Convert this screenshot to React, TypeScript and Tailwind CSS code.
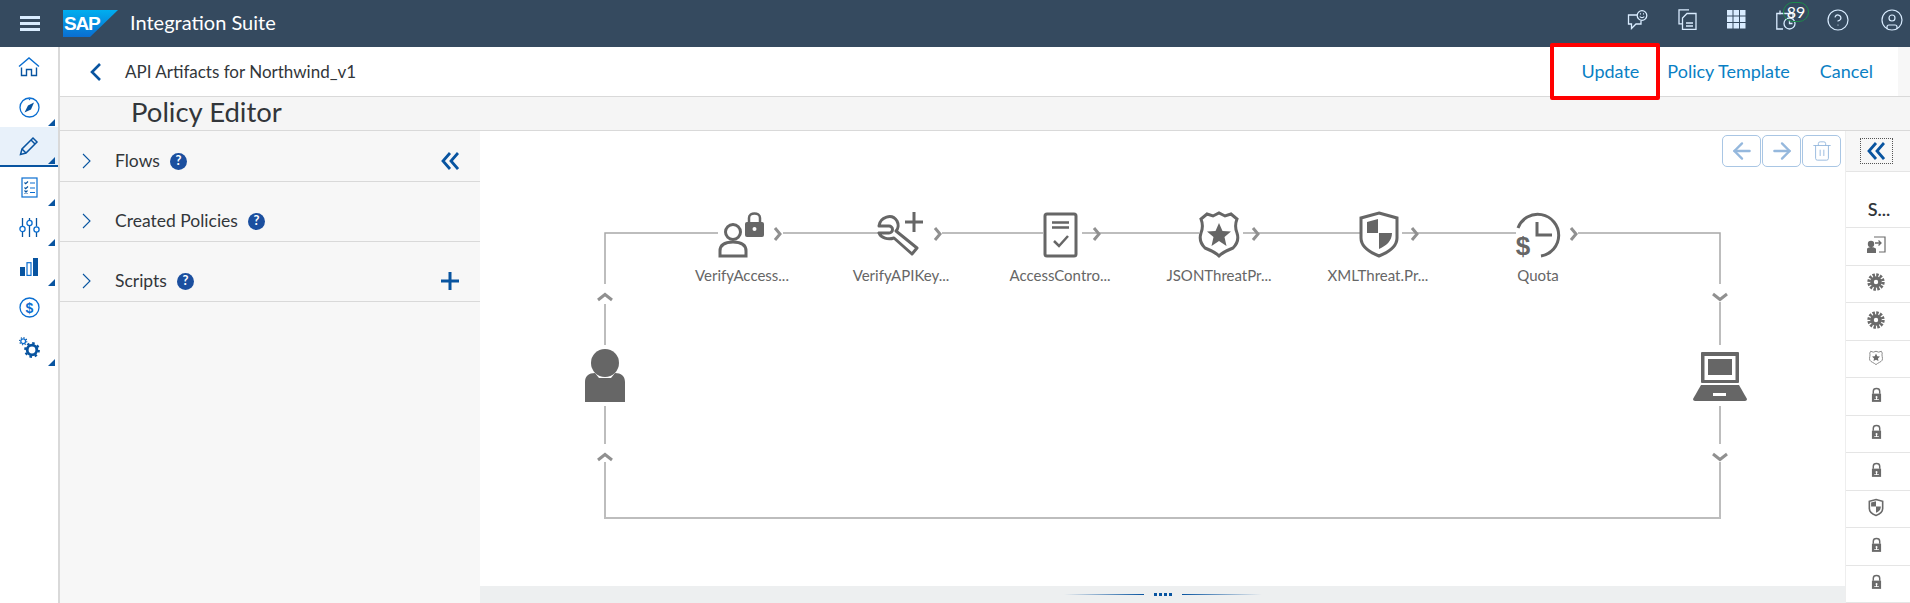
import { useId } from "react";
import { ArrowLeft, ArrowRight, Trash2, CircleHelp, CircleUser } from "lucide-react";

const FONT = "font-['Lato','Noto_Sans',sans-serif]";

function SapLogo() {
  const id = useId();
  return (
    <svg width="55" height="27" viewBox="0 0 55 27">
      <defs>
        <linearGradient id={id} x1="0" y1="0" x2="0" y2="1">
          <stop offset="0" stopColor="#00aeef" />
          <stop offset="1" stopColor="#0a6ed1" />
        </linearGradient>
      </defs>
      <polygon points="0,0 55,0 27,27 0,27" fill={`url(#${id})`} />
      <text x="1" y="20" fontFamily="Liberation Sans" fontWeight="700" fontSize="19" letterSpacing="-1.2" fill="#fff">
        SAP
      </text>
    </svg>
  );
}

function HomeIcon() {
  return (
    <svg width="22" height="20" viewBox="0 0 22 20" fill="none" stroke="#0a6ed1" strokeWidth="1.400">
      <path d="M1 9.500L11 1l10 8.500" />
      <path d="M3.500 10.500V18.500H8.500V12.500H13.500V18.500H18.500V10.500" stroke="#0854a0" />
    </svg>
  );
}

function CompassIcon() {
  return (
    <svg width="21" height="21" viewBox="0 0 21 21" fill="none">
      <circle cx="10.500" cy="10.500" r="9.500" stroke="#0a6ed1" strokeWidth="1.300" />
      <path d="M15 5.500L12 12.500L5.500 15.500L9 8.500z" fill="#0854a0" />
      <circle cx="10.500" cy="2.500" r="0.800" fill="#0a6ed1" />
    </svg>
  );
}

function PencilIcon() {
  return (
    <svg width="20" height="20" viewBox="0 0 20 20" fill="none" stroke="#0854a0" strokeWidth="1.500">
      <path d="M1.500 18.500l1.500-5.500L14 2l4 4L7 17z" />
      <path d="M12 4l4 4M3 13l4 4" />
    </svg>
  );
}

function Checklist() {
  return (
    <svg width="17" height="21" viewBox="0 0 17 21" fill="none" stroke="#0a6ed1" strokeWidth="1.200">
      <rect x="1" y="1" width="15" height="19" />
      <path d="M3.500 5.500l1.200 1.200L7 4.500M3.500 10.500l1.200 1.200L7 9.500M3.500 13.500l3 3M6.500 13.500l-3 3" stroke="#0854a0" />
      <path d="M9 6h5M9 11h5M9 15.500h5" />
    </svg>
  );
}

function Sliders() {
  return (
    <svg width="21" height="19" viewBox="0 0 21 19" fill="none" stroke="#0a6ed1" strokeWidth="1.300">
      <path d="M3.500 0v8M3.500 14v5M10.500 0v2M10.500 8v11M17.500 0v8.500M17.500 14v5" stroke="#0854a0" />
      <circle cx="3.500" cy="11" r="2.600" />
      <circle cx="10.500" cy="5" r="2.600" />
      <circle cx="17.500" cy="11.500" r="2.600" />
    </svg>
  );
}

function Bars() {
  return (
    <svg width="18" height="18" viewBox="0 0 18 18">
      <rect x="0" y="9" width="5" height="9" fill="#0854a0" />
      <rect x="7" y="4.700" width="4" height="12.700" fill="none" stroke="#0a6ed1" strokeWidth="1.200" />
      <rect x="13" y="0" width="5" height="18" fill="#0854a0" />
    </svg>
  );
}

function DollarCircle() {
  return (
    <svg width="21" height="21" viewBox="0 0 21 21">
      <circle cx="10.500" cy="10.500" r="9.500" fill="none" stroke="#0a6ed1" strokeWidth="1.300" />
      <text x="10.500" y="15.500" textAnchor="middle" fontFamily="Liberation Sans" fontWeight="700" fontSize="14" fill="#0a6ed1">
        $
      </text>
    </svg>
  );
}

function Gears() {
  return (
    <svg width="21" height="21" viewBox="0 0 21 21" fill="none">
      <circle cx="4.200" cy="4.200" r="2.400" stroke="#0a6ed1" strokeWidth="1.300" />
      <circle cx="4.200" cy="4.200" r="3.600" stroke="#0854a0" strokeWidth="1.100" strokeDasharray="1.200 1.600" />
      <circle cx="13" cy="13" r="4.800" stroke="#0854a0" strokeWidth="2.800" />
      <circle cx="13" cy="13" r="6.800" stroke="#0854a0" strokeWidth="2.200" strokeDasharray="2.500 2.840" />
    </svg>
  );
}

const RAIL = [
  { icon: <HomeIcon />, tri: false },
  { icon: <CompassIcon />, tri: true },
  { icon: <PencilIcon />, tri: true, active: true },
  { icon: <Checklist />, tri: true },
  { icon: <Sliders />, tri: true },
  { icon: <Bars />, tri: true },
  { icon: <DollarCircle />, tri: false },
  { icon: <Gears />, tri: true },
];

function Rail() {
  return (
    <nav className="flex w-[60px] shrink-0 flex-col border-r-2 border-[#d9d9d9] bg-white">
      {RAIL.map((r, i) => (
        <div
          key={i}
          className={
            r.active
              ? "relative flex h-[40px] items-center justify-center border-b-2 border-[#0854a0] bg-[#e8f1fa]"
              : "relative flex h-[40px] items-center justify-center"
          }
        >
          {r.icon}
          {r.tri && (
            <span className="absolute bottom-[1px] right-[3px] h-0 w-0 border-b-[7px] border-l-[7px] border-b-[#0854a0] border-l-transparent" />
          )}
        </div>
      ))}
    </nav>
  );
}

function HeaderIcons() {
  const c = "#d9ecff";
  return (
    <div className="ml-auto flex items-center gap-[30px] pb-[8px] pr-[6px]">
      <svg width="21" height="20" viewBox="0 0 21 20" fill="none" stroke={c} strokeWidth="1.300">
        <path d="M10 5H1.500v9h3v4.500L9 14h5v-3" />
        <circle cx="15" cy="5.500" r="4.800" />
        <path d="M12.800 6.500c1 1.500 3.400 1.500 4.400 0M13 3.800h1M16 3.800h1" />
      </svg>
      <svg width="19" height="21" viewBox="0 0 19 21" fill="none" stroke={c} strokeWidth="1.300">
        <path d="M11 0.800H1v14h3" />
        <path d="M9 4.500h9v16H4.500V9z" />
        <path d="M8 14h7M8 17h7" />
      </svg>
      <svg width="19" height="19" viewBox="0 0 19 19" fill={c}>
        {[0, 6.500, 13].map((y) => [0, 6.500, 13].map((x) => <rect key={`${x}-${y}`} x={x} y={y} width="5.500" height="5.500" />))}
      </svg>
      <div className="relative h-[20px] w-[20px]">
        <svg width="20" height="20" viewBox="0 0 20 20" fill="none" stroke={c} strokeWidth="1.300">
          <path d="M7 19H0.800V3.500H17v5M4 0.500v4M14 0.500v4" />
          <circle cx="13.500" cy="13.500" r="5.500" />
          <path d="M13.500 10.500v3h3" />
        </svg>
        <span className={`absolute left-[7px] top-[-8px] flex h-[20px] w-[26px] items-center justify-center rounded-full border border-[#1d8a4b] text-[16px] text-white ${FONT}`}>
          89
        </span>
      </div>
      <CircleHelp size={24} strokeWidth={1.200} color={c} />
      <CircleUser size={24} strokeWidth={1.200} color={c} />
    </div>
  );
}

function DoubleLeft({ size = 18 }: { size?: number }) {
  return (
    <svg width={size} height={size} viewBox="0 0 18 18" fill="none" stroke="#0854a0" strokeWidth="2.800">
      <path d="M9 1L2 9l7 8M17 1l-7 8 7 8" />
    </svg>
  );
}

function PanelRow({ title, first, action }: { title: string; first?: boolean; action?: React.ReactNode }) {
  return (
    <div className={`flex items-end border-b border-[#d9d9d9] ${first ? "h-[51px]" : "h-[60px]"}`}>
      <div className="flex h-[40px] w-full items-center pl-[22px] pr-[21px]">
        <svg width="9" height="16" viewBox="0 0 9 16" fill="none" stroke="#0854a0" strokeWidth="1.100">
          <path d="M1 1l7 7-7 7" />
        </svg>
        <span className="ml-[24px] text-[17.5px] text-[#32363a]">{title}</span>
        <span className="ml-[10px] flex h-[17px] w-[17px] items-center justify-center rounded-full bg-[#1b4f9f] text-[13px] font-bold text-white">?</span>
        <span className="ml-auto flex">{action}</span>
      </div>
    </div>
  );
}

const NODES = [
  { label: "VerifyAccess...", x: 262 },
  { label: "VerifyAPIKey...", x: 421 },
  { label: "AccessContro...", x: 580 },
  { label: "JSONThreatPr...", x: 739 },
  { label: "XMLThreat.Pr...", x: 898 },
  { label: "Quota", x: 1058 },
];

function Chevron({ x, y, dir }: { x: number; y: number; dir: "r" | "u" | "d" }) {
  const d = dir === "r" ? "M-3 -6 L2 0 L-3 6" : dir === "u" ? "M-7 3 L0 -2.500 L7 3" : "M-7 -3 L0 2.500 L7 -3";
  return (
    <g transform={`translate(${x} ${y})`}>
      <path d={d} fill="none" stroke="#909090" strokeWidth="3" />
    </g>
  );
}

function Diagram() {
  const ic = "#666";
  return (
    <>
      <svg className="absolute inset-0" width="1365" height="455" viewBox="480 131 1365 455" fill="none">
        <g stroke="#a8a8a8" strokeWidth="1.500">
          <path d="M605 284V233H718M783 233H878M942 233H1043M1082 233H1199M1243 233H1360M1402 233H1516M1578 233H1720V284" />
          <path d="M1720 302V345M1720 406V444M1720 462V518H605V462M605 444V406M605 345V304" stroke="#bdbdbd" strokeWidth="2" />
        </g>
        {[778, 938, 1097, 1256, 1415, 1574].map((x) => (
          <Chevron key={x} x={x} y={234} dir="r" />
        ))}
        <Chevron x={605} y={297} dir="u" />
        <Chevron x={605} y={457} dir="u" />
        <Chevron x={1720} y={297} dir="d" />
        <Chevron x={1720} y={457} dir="d" />

        {/* person + lock */}
        <g stroke={ic} strokeWidth="3">
          <circle cx="733" cy="232" r="7.500" />
          <path d="M720 256v-5c0-6 5-9 13-9s13 3 13 9v5z" />
        </g>
        <rect x="745" y="222" width="19" height="15" rx="2" fill={ic} />
        <path d="M749 222v-4c0-6 11-6 11 0v4" stroke={ic} strokeWidth="2.500" />
        <circle cx="754.500" cy="229" r="2" fill="#fff" />

        {/* wrench + plus */}
        <path d="M879 226C880 217 892 213 897 221C899 225 898 229 896 231L917 248L912 254L894 238C888 240 881 238 879 233H889a3.500 3.500 0 0 0 0 -7H879Z" fill="#fff" stroke={ic} strokeWidth="3" strokeLinejoin="round" />
        <path d="M905 222h18M914 212v20" stroke={ic} strokeWidth="3" />

        {/* document */}
        <rect x="1045" y="214" width="31" height="42" rx="2" stroke={ic} strokeWidth="3" />
        <path d="M1052 222.500h17M1052 227.500h17" stroke={ic} strokeWidth="2.500" />
        <path d="M1054 241l5 5l9-10" stroke={ic} strokeWidth="2.500" />

        {/* police badge */}
        <path d="M1207 214l6 2l6-3l6 3l6-2l6 5c-2 5-2 9 0 14c2 6 0 11-4 15c-5 2-10 4-14 8c-4-4-9-6-14-8c-4-4-6-9-4-15c2-5 2-9 0-14z" stroke={ic} strokeWidth="3" />
        <polygon points="1219,223 1222.500,231 1231,231.500 1224.500,237 1226.500,246 1219,241 1211.500,246 1213.500,237 1207,231.500 1215.500,231" fill={ic} />

        {/* shield */}
        <path d="M1379 213l18 5v20c0 8-8 14-18 18c-10-4-18-10-18-18v-20z" stroke={ic} strokeWidth="3" />
        <path d="M1367 222l11-3v14h-11zM1379 233h13c0 8-6 13-13 16z" fill={ic} />

        {/* quota */}
        <path d="M1518 228a21 21 0 1 1 23 28" stroke={ic} strokeWidth="3" />
        <path d="M1537 222v13h15" stroke={ic} strokeWidth="3" />
        <text x="1523" y="255" textAnchor="middle" fontFamily="Liberation Sans" fontWeight="700" fontSize="26" fill={ic}>$</text>

        {/* user */}
        <circle cx="605" cy="363" r="14" fill={ic} />
        <path d="M585 402v-20c0-6 4-9 10-9l4 5h12l4-5c6 0 10 3 10 9v20z" fill={ic} />

        {/* laptop */}
        <rect x="1701" y="352" width="38" height="31" rx="1" fill={ic} />
        <rect x="1704.500" y="356" width="31" height="24" fill="#fff" />
        <rect x="1708" y="359" width="24" height="16" fill={ic} />
        <path d="M1701 385h38l8 14c0 1-1 2-2 2h-50c-1 0-2-1-2-2z" fill={ic} />
        <rect x="1713" y="393" width="13" height="3" fill="#fff" />
      </svg>
      {NODES.map((n) => (
        <span key={n.label} className="absolute top-[133px] -translate-x-1/2 text-[15px] whitespace-nowrap text-[#666]" style={{ left: n.x }}>
          {n.label}
        </span>
      ))}
    </>
  );
}

type SmallKind = "swap" | "gear" | "badge" | "lock" | "shield";

function SmallIcon({ kind }: { kind: SmallKind }) {
  const c = "#6a6a6a";
  if (kind === "swap")
    return (
      <svg width="20" height="20" viewBox="0 0 20 20" fill="none">
        <path d="M8 2h11v15h-6" stroke={c} strokeWidth="1.200" />
        <circle cx="5" cy="9" r="3.200" fill={c} />
        <path d="M1 18v-4c0-1 2-2 4-2s5 1 5 2v4z" fill={c} />
        <path d="M9 8h6M12.500 5.500L15 8l-2.500 2.500" stroke={c} strokeWidth="1.300" />
      </svg>
    );
  if (kind === "gear")
    return (
      <svg width="18" height="18" viewBox="0 0 18 18" fill="none">
        <circle cx="9" cy="9" r="4" stroke={c} strokeWidth="3.600" />
        <circle cx="9" cy="9" r="7" stroke={c} strokeWidth="3.400" strokeDasharray="2.400 1.265" />
      </svg>
    );
  if (kind === "badge")
    return (
      <svg width="16" height="17" viewBox="0 0 18 18" fill="none">
        <path d="M3 2l3 1l3-1l3 1l3-1l1 2c-1 3 1 5 0 8c-1 2-5 3-7 5c-2-2-6-3-7-5c-1-3 1-5 0-8z" stroke="#8a8a8a" strokeWidth="1.100" />
        <polygon points="9,4.500 10.400,7.600 13.500,8 11.200,10 11.800,13 9,11.500 6.200,13 6.800,10 4.500,8 7.600,7.600" fill={c} />
      </svg>
    );
  if (kind === "shield")
    return (
      <svg width="16" height="19" viewBox="0 0 18 20" fill="none">
        <path d="M9 1l7.500 2v8c0 4-3.500 6.500-7.500 8c-4-1.500-7.500-4-7.500-8V3z" stroke={c} strokeWidth="1.800" />
        <path d="M3.500 4.500L9 3v6H3.500zM9 9h5.500c0 3.500-2.500 6-5.500 7z" fill={c} />
      </svg>
    );
  return (
    <svg width="11" height="16" viewBox="0 0 12 17" fill="none">
      <path d="M2.500 7V4.500c0-4 7-4 7 0V7" stroke={c} strokeWidth="1.600" />
      <rect x="1" y="7" width="10" height="9" fill={c} />
      <path d="M6 9.500a1.200 1.200 0 0 1 .6 2.200V13h2v1H3.500v-1h2v-1.300A1.200 1.200 0 0 1 6 9.500z" fill="#fff" />
    </svg>
  );
}

const POLICIES: SmallKind[] = ["swap", "gear", "gear", "badge", "lock", "lock", "lock", "shield", "lock", "lock"];

export default function App() {
  return (
    <div className={`flex h-[603px] w-[1910px] flex-col overflow-hidden bg-white ${FONT}`}>
      <header className="flex h-[47px] shrink-0 items-center bg-[#354a5f]">
        <div className="flex w-[60px] justify-center">
          <div className="flex h-[15px] w-[20px] flex-col justify-between">
            <span className="h-[3px] bg-[#d9ecff]" />
            <span className="h-[3px] bg-[#d9ecff]" />
            <span className="h-[3px] bg-[#d9ecff]" />
          </div>
        </div>
        <div className="ml-[3px]">
          <SapLogo />
        </div>
        <span className="ml-[12px] pb-[4px] text-[20px] text-white">Integration Suite</span>
        <HeaderIcons />
      </header>

      <div className="flex min-h-0 flex-1">
        <Rail />
        <div className="flex min-w-0 flex-1 flex-col bg-[#f7f7f7]">
          <div className="mr-[12px] flex h-[49px] shrink-0 items-center bg-white pl-[30px] pr-[25px]">
            <svg width="11" height="18" viewBox="0 0 11 18" fill="none" stroke="#0854a0" strokeWidth="2.600">
              <path d="M10 1L2 9l8 8" />
            </svg>
            <span className="ml-[24px] text-[17px] text-[#32363a]">API Artifacts for Northwind_v1</span>
            <div className="ml-auto flex items-center gap-[30px] text-[18px] text-[#0a7fc4]">
              <span className="relative -mr-[2px]">
                Update
                <span className="absolute -bottom-[15px] -left-[31px] -right-[21px] -top-[15px] rounded-[2px] border-[4px] border-[#ff0000]" />
              </span>
              <span>Policy Template</span>
              <span>Cancel</span>
            </div>
          </div>
          <div className="flex h-[35px] shrink-0 items-center border-y border-[#d9d9d9] bg-[#f5f5f5] pb-[4px] pl-[71px] text-[27.5px] text-[#32363a]">
            Policy Editor
          </div>
          <div className="flex min-h-0 flex-1">
            <aside className="w-[420px] shrink-0 bg-[#f7f7f7]">
              <PanelRow title="Flows" first action={<DoubleLeft />} />
              <PanelRow title="Created Policies" />
              <PanelRow
                title="Scripts"
                action={
                  <svg width="18" height="18" viewBox="0 0 18 18" stroke="#0854a0" strokeWidth="3">
                    <path d="M9 0v18M0 9h18" />
                  </svg>
                }
              />
            </aside>
            <main className="relative flex min-w-0 flex-1 flex-col bg-white">
              <div className="relative z-10 flex justify-end gap-[1px] pr-[4px] pt-[4px]">
                {[ArrowLeft, ArrowRight, Trash2].map((Icon, i) => (
                  <span key={i} className="flex h-[32px] w-[39px] items-center justify-center rounded-[5px] border border-[#a9c6e4]">
                    <Icon size={i === 2 ? 22 : 26} strokeWidth={i === 2 ? 1 : 2.200} color="#95b8dd" />
                  </span>
                ))}
              </div>
              <Diagram />
              <div className="relative z-10 mt-auto flex h-[17px] items-center justify-center bg-[#edeff0]">
                <span className="h-[1px] w-[80px] bg-gradient-to-r from-transparent to-[#0854a0]" />
                <span className="mx-[10px] flex gap-[2px]">
                  {[0, 1, 2, 3].map((d) => (
                    <span key={d} className="h-[3px] w-[3px] bg-[#0854a0]" />
                  ))}
                </span>
                <span className="h-[1px] w-[80px] bg-gradient-to-l from-transparent to-[#0854a0]" />
              </div>
            </main>
            <aside className="flex w-[65px] shrink-0 flex-col border-l border-[#eeeeee] bg-white">
              <div className="flex h-[41px] shrink-0 items-center justify-center border-b border-[#e5e5e5] bg-[#f7f7f7] pr-[4px]">
                <span className="flex h-[26px] w-[33px] items-center justify-center border border-dotted border-[#555]">
                  <DoubleLeft />
                </span>
              </div>
              <div className="flex h-[56px] shrink-0 items-center justify-center border-b border-[#e5e5e5] pb-[2px] pl-[2px] pt-[22px] text-[18px] font-semibold text-[#32363a]">
                S...
              </div>
              {POLICIES.map((k, i) => (
                <div key={i} className="flex h-[37.5px] shrink-0 items-center justify-center border-b border-[#e5e5e5] pb-[3px] pr-[4px]">
                  <SmallIcon kind={k} />
                </div>
              ))}
            </aside>
          </div>
        </div>
      </div>
    </div>
  );
}
